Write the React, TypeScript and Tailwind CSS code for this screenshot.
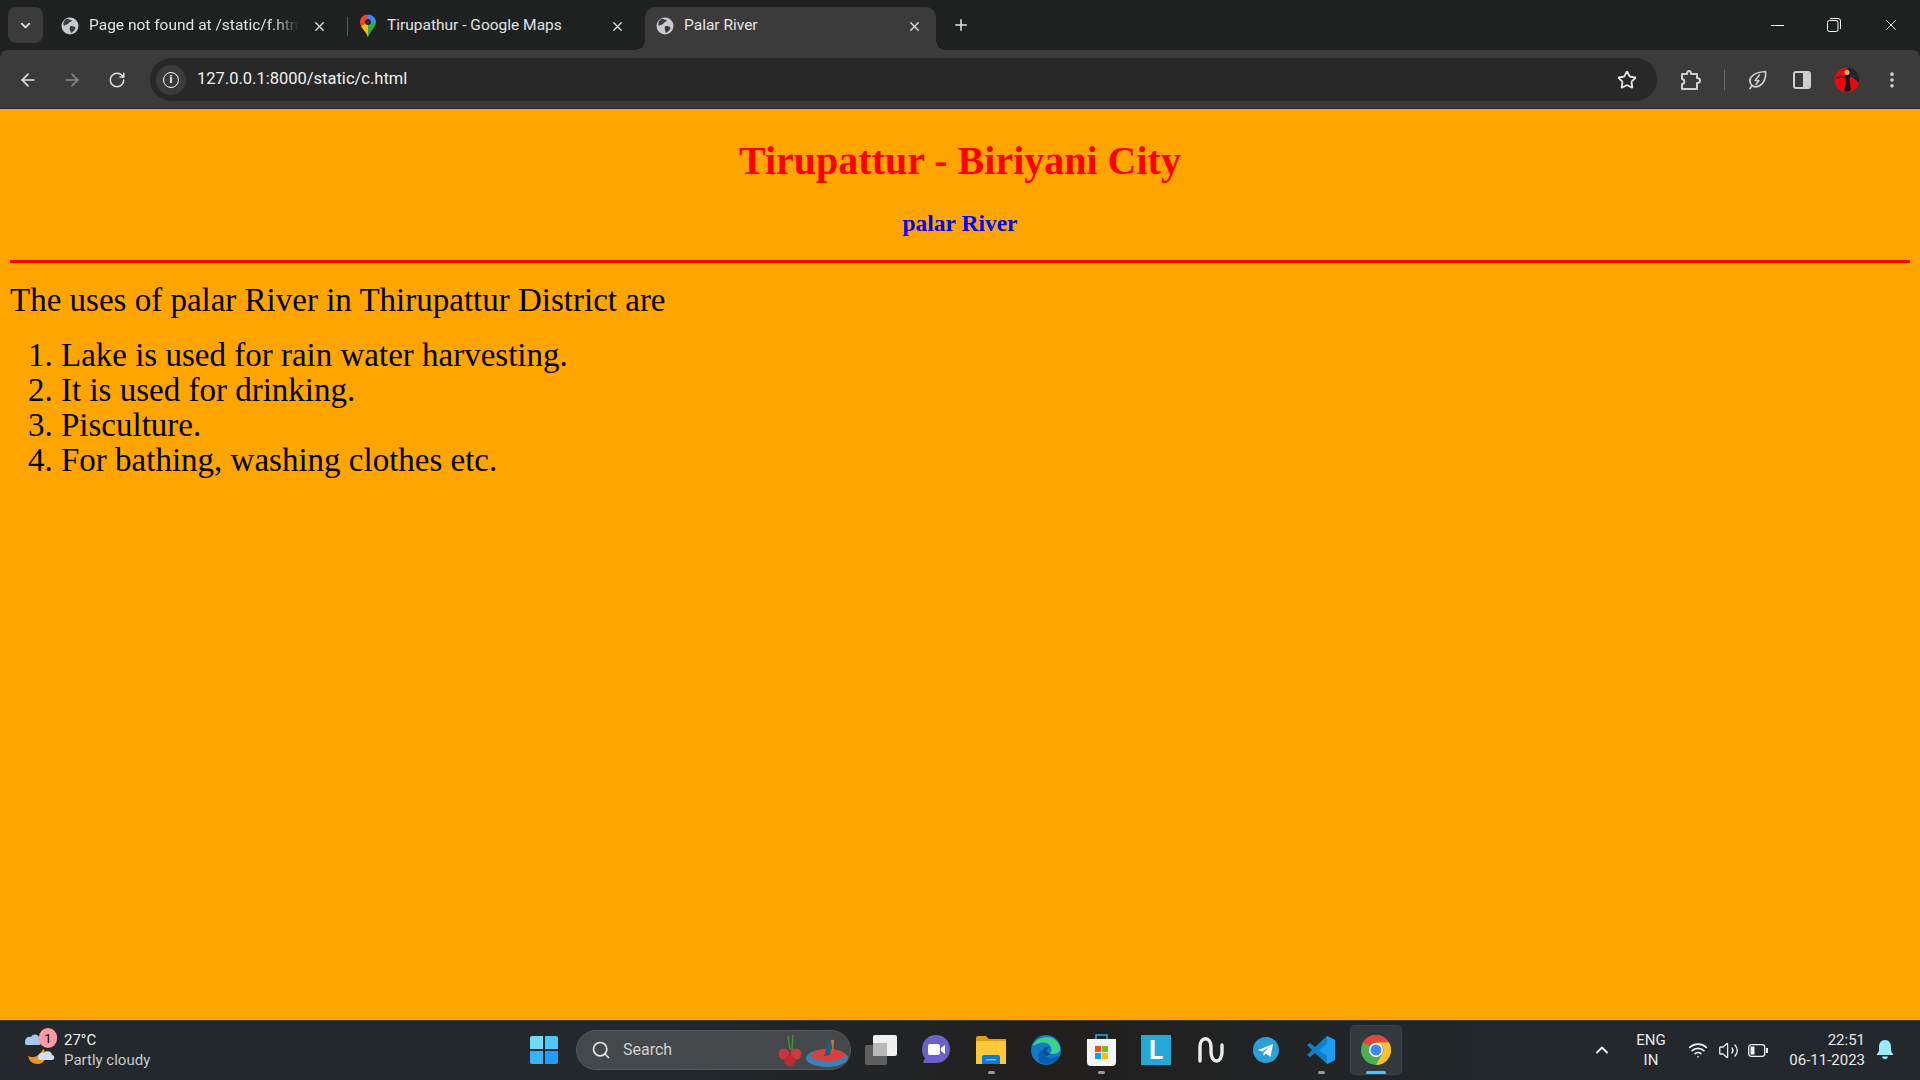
import { ArrowLeft, ArrowRight, ChevronDown, ChevronUp, MoreVertical, Plus, RotateCw, Search, Star, Volume2, Wifi, X } from "lucide-react";

const Globe = () => (
  <svg width="18" height="18" viewBox="0 0 18 18" className="shrink-0">
    <circle cx="9" cy="9" r="8.5" fill="#c7c9cc" />
    <path d="M6 1.5 C8 3 10 2.5 11 3.5 C10 5 8 5 7.5 6.5 C6.5 8 4 7.5 3 9 C2 7 2 4 6 1.5 Z" fill="#3b3b3b" />
    <path d="M9 9.5 C11 8.5 14 9.5 14.5 11 C14 13 12 15 10 16 C9.5 14 8 12 9 9.5 Z" fill="#3b3b3b" />
  </svg>
);

const MapsPin = () => (
  <svg width="18" height="24" viewBox="0 0 18 24" className="shrink-0">
    <path d="M9 0.5 C4 0.5 1 4 1 8 C1 9.5 1.4 10.7 2 12 L9 8 Z" fill="#ea4335" />
    <path d="M9 0.5 C13 0.5 17 4 17 8 L9 8 Z" fill="#4285f4" />
    <path d="M2 12 C4 16 7.5 18 9 23.5 L9 8 Z" fill="#fbbc04" />
    <path d="M17 8 C17 13 11 17 9 23.5 L9 8 Z" fill="#34a853" />
    <circle cx="9" cy="8" r="3" fill="#2b2b2b" />
  </svg>
);

const Tab = ({ title, icon, active, fade }: { title: string; icon: React.ReactNode; active?: boolean; fade?: boolean }) => (
  <div className={`relative flex h-[43px] shrink-0 items-center pb-[5px] pl-[11px] ${active ? "w-[291px] rounded-t-[10px] bg-[#3b3b3b] pr-[14px]" : "w-[297px] pr-[20px]"}`}>
    {active && (
      <>
        <div className="absolute bottom-0 left-[-10px] h-[10px] w-[10px] bg-[radial-gradient(circle_at_0_0,transparent_10px,#3b3b3b_10px)]" />
        <div className="absolute bottom-0 right-[-10px] h-[10px] w-[10px] bg-[radial-gradient(circle_at_100%_0,transparent_10px,#3b3b3b_10px)]" />
      </>
    )}
    <div className="flex w-[28px] justify-start">{icon}</div>
    <div className={`w-[210px] overflow-hidden whitespace-nowrap text-[15.5px] text-[#e3e3e3] ${fade ? "[mask-image:linear-gradient(90deg,#000_88%,transparent)]" : ""}`}>
      {title}
    </div>
    <X size={15} strokeWidth={2} className="ml-auto text-[#e3e3e3]" />
  </div>
);

const WinLogo = () => (
  <div className="grid h-[28px] w-[28px] grid-cols-2 gap-[1.5px]">
    <div className="rounded-tl-[2px] bg-[#6fdcfb]" />
    <div className="rounded-tr-[2px] bg-[#4dc8fa]" />
    <div className="rounded-bl-[2px] bg-[#35b4fb]" />
    <div className="rounded-br-[2px] bg-[#1c9efc]" />
  </div>
);

const TaskIcon = ({ children, dot, active }: { children: React.ReactNode; dot?: boolean; active?: boolean }) => (
  <div className={`relative flex h-[50px] w-[52px] shrink-0 items-center justify-center rounded-[5px] ${active ? "border border-[#3d4246] bg-[#33383c]" : ""}`}>
    {children}
    {dot && <div className="absolute bottom-[1px] h-[3px] w-[7px] rounded-full bg-[#9a9a9a]" />}
    {active && <div className="absolute bottom-0 h-[3px] w-[20px] rounded-full bg-[#4cc2ff]" />}
  </div>
);

export default function App() {
  return (
    <div className="flex h-[1080px] w-[1920px] flex-col overflow-hidden bg-[#1f2121] font-['Liberation_Serif',serif]">
      {/* tab strip */}
      <div className="flex h-[50px] shrink-0 items-end bg-[#1f2121] font-['Roboto',sans-serif]">
        <div className="mb-[7px] ml-[8px] mr-[7px] flex h-[36px] w-[35px] items-center justify-center rounded-[8px] bg-[#3b3b3b]">
          <ChevronDown size={15} strokeWidth={3} className="text-[#e3e3e3]" />
        </div>
        <Tab title="Page not found at /static/f.html" icon={<Globe />} fade />
        <div className="mb-[14px] h-[19px] w-px bg-[#5a5a5a]" />
        <Tab title="Tirupathur - Google Maps" icon={<MapsPin />} />
        <Tab title="Palar River" icon={<Globe />} active />
        <Plus size={18} strokeWidth={2} className="mb-[16px] ml-[16px] text-[#e3e3e3]" />
        <div className="mb-[16px] ml-auto flex items-center text-white">
          <div className="h-px w-[13px] bg-white" />
          <svg width="14" height="14" viewBox="0 0 14 14" className="ml-[43px]" fill="none" stroke="#fff">
            <rect x="0.5" y="2.5" width="10.5" height="11" rx="2" />
            <path d="M3 0.5 H11 Q13.5 0.5 13.5 3 V11" />
          </svg>
          <X size={18} strokeWidth={1.2} className="ml-[41px] mr-[20px]" />
        </div>
      </div>

      {/* toolbar */}
      <div className="flex h-[59px] shrink-0 items-center rounded-t-[8px] border-b border-[#2a2a2a] bg-[#3b3b3b] pt-[1px] font-['Roboto',sans-serif]">
        <ArrowLeft size={20} strokeWidth={2} className="ml-[18px] text-[#e3e3e3]" />
        <ArrowRight size={20} strokeWidth={2} className="ml-[24px] text-[#8a8a8a]" />
        <RotateCw size={18} strokeWidth={2} className="ml-[26px] text-[#e3e3e3]" />
        <div className="ml-[24px] flex h-[43px] w-[1507px] items-center rounded-full bg-[#282828] pl-[6px]">
          <div className="flex h-[30px] w-[30px] items-center justify-center rounded-full bg-[#3b3b3b]">
            <div className="flex h-[16px] w-[16px] items-center justify-center rounded-full border-[1.5px] border-white text-[11px] font-bold leading-none text-white">i</div>
          </div>
          <span className="ml-[11px] text-[16.5px] text-[#f0f0f0]">127.0.0.1:8000/static/c.html</span>
          <Star size={20} strokeWidth={2.2} className="ml-auto mr-[20px] text-[#e3e3e3]" />
        </div>
        <svg width="22" height="22" viewBox="0 0 22 22" className="ml-[23px]" fill="none" stroke="#d0d0d0" strokeWidth="2" strokeLinejoin="round">
          <path d="M2 5 H7 C7 1 11 1 11 5 H17 V9 C21 9 21 14 17 14 V20 H2 V15 C5 15 5 10 2 10 Z" />
        </svg>
        <div className="ml-[22px] h-[20px] w-px bg-[#6a6a6a]" />
        <svg width="20" height="20" viewBox="0 0 20 20" className="ml-[22px]" fill="none" stroke="#d0d0d0" strokeWidth="1.7" strokeLinejoin="round" strokeLinecap="round">
          <path d="M3 18.5 L5 15.5 C0 10 4 2.5 18.5 1.5 C19.5 12 12 20 5 15.5" />
          <path d="M12.5 5 L8 10.5 H12 L9 14.5" strokeWidth="1.5" />
        </svg>
        <div className="ml-[26px] flex h-[18px] w-[18px] overflow-hidden rounded-[3px] border-2 border-[#d0d0d0]">
          <div className="w-[8px]" />
          <div className="flex-1 bg-[#d0d0d0]" />
        </div>
        <svg width="26" height="26" viewBox="0 0 26 26" className="ml-[23px]">
          <circle cx="13" cy="13" r="12.5" fill="#e8090f" />
          <path d="M13 0.5 A12.5 12.5 0 0 1 25.5 13 L25 16 L17 9 Z" fill="#1d2430" />
          <path d="M2 10 L24 8 L24 9.5 L2 11.5 Z" fill="#26303a" />
          <path d="M11 5 L15 4 L16 8 L15.5 14 L17 23 L14 25 L10 24 L12 16 Z" fill="#14181e" />
          <circle cx="13" cy="5.5" r="2.5" fill="#e0b85a" />
        </svg>
        <MoreVertical size={20} strokeWidth={2.4} className="ml-[22px] text-[#d0d0d0]" />
      </div>

      {/* page */}
      <main className="min-h-0 flex-1 bg-[#ffa500] px-[10px]">
        <h1 className="pt-[29px] text-center text-[40px] font-bold leading-[46px] text-[#ff0000]">Tirupattur - Biriyani City</h1>
        <h2 className="mt-[26px] text-center text-[23.5px] font-bold leading-[27px] text-[#0000ff]">palar River</h2>
        <hr className="mt-[23px] h-[3px] border-0 bg-[#ff0000]" />
        <p className="mt-[20px] text-[33px] leading-[35px] text-black">The uses of palar River in Thirupattur District are</p>
        <ol className="mt-[20px] list-decimal pl-[51px] text-[33px] leading-[35px] text-black">
          <li>Lake is used for rain water harvesting.</li>
          <li>It is used for drinking.</li>
          <li>Pisculture.</li>
          <li>For bathing, washing clothes etc.</li>
        </ol>
      </main>

      {/* taskbar */}
      <footer className="flex h-[60px] shrink-0 items-center border-t border-[#3a3d40] bg-[linear-gradient(90deg,#22282c_0%,#22282c_35%,#211f1e_55%,#22282c_80%,#22282c_100%)] pb-[1px] font-['Roboto',sans-serif]">
        <div className="relative ml-[25px] h-[40px] w-[34px] shrink-0">
          <svg width="34" height="40" viewBox="0 0 34 40" className="absolute left-0 top-0">
            <path d="M0 12 C0 8 3 6 6 7 C8 3 14 4 15 9 C17 10 17 15 14 15 H2 C0 15 0 14 0 12 Z" fill="#a9c6ef" />
            <path d="M3 26 C8 29 15 26 18 19 C24 24 20 35 12 34 C8 34 4 31 3 26 Z" fill="#f0921e" />
            <path d="M13 27 C13 23 17 22 19 23 C21 20 27 21 27 25 C30 25 30 30 27 30 H15 C14 30 13 29 13 27 Z" fill="#cfe0f5" />
          </svg>
          <div className="absolute left-[14px] top-[-2px] flex h-[20px] w-[18px] items-center justify-center rounded-full bg-[#ff99a4] text-[13px] leading-none text-black">1</div>
        </div>
        <div className="ml-[5px] flex w-[160px] shrink-0 flex-col text-[15px] leading-[20px]">
          <span className="text-[#f2f2f2]">27°C</span>
          <span className="text-[#c9cbcd]">Partly cloudy</span>
        </div>
        <div className="ml-[306px] shrink-0">
          <WinLogo />
        </div>
        <div className="ml-[18px] flex h-[40px] w-[275px] shrink-0 items-center rounded-full border border-[#55585b] bg-[#45484b] pl-[14px]">
          <Search size={20} strokeWidth={2} className="text-[#e6e6e6]" />
          <span className="ml-[12px] text-[16px] text-[#d0d0d0]">Search</span>
          <svg width="70" height="36" viewBox="0 0 70 36" className="ml-auto mr-[2px]">
            <ellipse cx="49" cy="26" rx="21" ry="9" fill="#3f7fb8" />
            <ellipse cx="50" cy="23" rx="17" ry="6" fill="#d8423c" />
            <path d="M52 23 L46 24 L52 6 L54 10 Z" fill="#1f5f7a" />
            <path d="M55 22 L53 8 L56 8 Z" fill="#d9742b" />
            <path d="M10 4 L12 18 M15 3 L14 18" stroke="#4f8f2f" strokeWidth="1.5" />
            <circle cx="6" cy="22" r="5.5" fill="#c9353a" />
            <circle cx="18" cy="22" r="5.5" fill="#d03a3e" />
            <circle cx="12" cy="29" r="5.5" fill="#b72c33" />
          </svg>
        </div>
        <div className="ml-[4px] flex items-center gap-[3px]">
          <TaskIcon>
            <div className="relative h-[30px] w-[32px]">
              <div className="absolute bottom-0 left-0 h-[20px] w-[22px] rounded-[2px] bg-[#5e5e5e]" />
              <div className="absolute right-0 top-0 h-[21px] w-[24px] rounded-[2px] bg-[#f0f0f0]" />
              <div className="absolute left-[8px] top-[8px] h-[13px] w-[14px] bg-[#b8b8b8]" />
            </div>
          </TaskIcon>
          <TaskIcon>
            <svg width="30" height="32" viewBox="0 0 30 32">
              <path d="M15 1 C23 1 29 7 29 15 C29 23 23 29 15 29 H2 L4 24 C2 22 1 18 1 15 C1 7 7 1 15 1 Z" fill="#6b62c7" />
              <rect x="7" y="10" width="12" height="11" rx="2" fill="#fff" />
              <path d="M20 14 L24 11 V20 L20 17 Z" fill="#fff" />
            </svg>
          </TaskIcon>
          <TaskIcon dot>
            <svg width="30" height="28" viewBox="0 0 30 28">
              <path d="M0 2 Q0 0 2 0 H10 L13 3 H30 V8 H0 Z" fill="#dc9e0c" />
              <rect x="0" y="5" width="30" height="23" fill="#fdc83a" />
              <path d="M6 28 V21 Q6 19 8 19 H22 Q24 19 24 21 V28 Z" fill="#0d78d6" />
              <rect x="10" y="23" width="10" height="1.5" fill="#74c1f5" />
            </svg>
          </TaskIcon>
          <TaskIcon>
            <svg width="30" height="30" viewBox="0 0 30 30">
              <circle cx="15" cy="15" r="15" fill="#0f7cc4" />
              <path d="M2 11 C5 1 24 -3 29 12 C30 19 22 20 19 18 C24 12 16 6 9 8 C6 9 3 10 2 11 Z" fill="#3fd08c" />
              <path d="M19 18 C17 24 11 20 12 15 C13 11 17 11 19 13 C15 13 15 18 19 18 Z" fill="#0b4f9a" />
              <path d="M12 15 C12 22 19 26 29 20 C25 29 15 31 9 27 C5 24 7 16 12 15 Z" fill="#0b5cb0" />
            </svg>
          </TaskIcon>
          <TaskIcon dot>
            <svg width="29" height="32" viewBox="0 0 29 32">
              <path d="M9 5 V1 H20 V5" fill="none" stroke="#2aa7e0" strokeWidth="1.6" />
              <path d="M0 5 H29 V28 Q29 32 25 32 H4 Q0 32 0 28 Z" fill="#f6f6f6" />
              <rect x="8" y="12" width="6" height="6" fill="#f25022" />
              <rect x="15" y="12" width="6" height="6" fill="#7fba00" />
              <rect x="8" y="19" width="6" height="6" fill="#00a4ef" />
              <rect x="15" y="19" width="6" height="6" fill="#ffb900" />
            </svg>
          </TaskIcon>
          <TaskIcon>
            <div className="flex h-[30px] w-[30px] items-center justify-center bg-[#22a9d6] text-[26px] font-bold leading-none text-white">L</div>
          </TaskIcon>
          <TaskIcon>
            <svg width="28" height="26" viewBox="0 0 28 26" fill="none" stroke="#ececec" strokeWidth="3.4" strokeLinecap="round">
              <path d="M3 24 V10 C3 -1 14 -1 14 10 V15 C14 27 25 27 25 15 V8" />
            </svg>
          </TaskIcon>
          <TaskIcon>
            <svg width="26" height="26" viewBox="0 0 26 26">
              <circle cx="13" cy="13" r="13" fill="#2a9fd8" />
              <path d="M5 13 L20 7 L17.5 20 L13 16.5 L10.5 19 L10.5 15.5 L17 10 L9 14.5 Z" fill="#fff" />
            </svg>
          </TaskIcon>
          <TaskIcon dot>
            <svg width="30" height="30" viewBox="0 0 30 30">
              <path d="M21 1 L29 5 V25 L21 29 L9 18 L4 22 L1 20 L6 15 L1 10 L4 8 L9 12 Z" fill="#0f80cc" />
              <path d="M21 1 L29 5 V25 L21 29 Z M21 9 L13 15 L21 21 Z" fill="#1f9cf0" fillRule="evenodd" />
            </svg>
          </TaskIcon>
          <TaskIcon active>
            <svg width="30" height="30" viewBox="0 0 30 30">
              <circle cx="15" cy="15" r="15" fill="#4caf50" />
              <path d="M15 0 A15 15 0 0 1 28 7.5 H15 A7.5 7.5 0 0 0 8.5 11.2 L2 7.5 A15 15 0 0 1 15 0 Z" fill="#e8453c" />
              <path d="M28 7.5 A15 15 0 0 1 15 30 L21.5 18.8 A7.5 7.5 0 0 0 21.5 11.2 L15 7.5 Z" fill="#fbc02d" />
              <circle cx="15" cy="15" r="7" fill="#fff" />
              <circle cx="15" cy="15" r="5.5" fill="#4285f4" />
            </svg>
          </TaskIcon>
        </div>
        <ChevronUp size={20} strokeWidth={2.2} className="ml-[190px] shrink-0 text-[#f0f0f0]" />
        <div className="ml-[19px] flex w-[40px] shrink-0 flex-col items-center text-[15px] leading-[20px] text-[#e8e8e8]">
          <span>ENG</span>
          <span>IN</span>
        </div>
        <Wifi size={20} strokeWidth={2} className="ml-[17px] shrink-0 text-[#f0f0f0]" />
        <Volume2 size={21} strokeWidth={1.5} className="ml-[10px] shrink-0 text-[#f0f0f0]" />
        <svg width="20" height="13" viewBox="0 0 20 13" className="ml-[9px] shrink-0" fill="none" stroke="#f0f0f0" strokeWidth="1.3">
          <rect x="0.7" y="0.7" width="16" height="11.6" rx="2.5" />
          <rect x="2.5" y="2.5" width="4" height="8" fill="#f0f0f0" stroke="none" />
          <rect x="18" y="4" width="2" height="5" fill="#f0f0f0" stroke="none" />
        </svg>
        <div className="ml-[12px] flex w-[85px] shrink-0 flex-col items-end text-[15px] leading-[20px] text-[#e8e8e8]">
          <span>22:51</span>
          <span className="whitespace-nowrap">06-11-2023</span>
        </div>
        <svg width="18" height="20" viewBox="0 0 18 20" className="ml-[11px] shrink-0">
          <path d="M9 0 C13 0 15 3 15 7 V11 L17.5 15 H0.5 L3 11 V7 C3 3 5 0 9 0 Z" fill="#99ebff" />
          <path d="M6 16.5 H12 C11.5 20 6.5 20 6 16.5 Z" fill="#99ebff" />
        </svg>
      </footer>
    </div>
  );
}
